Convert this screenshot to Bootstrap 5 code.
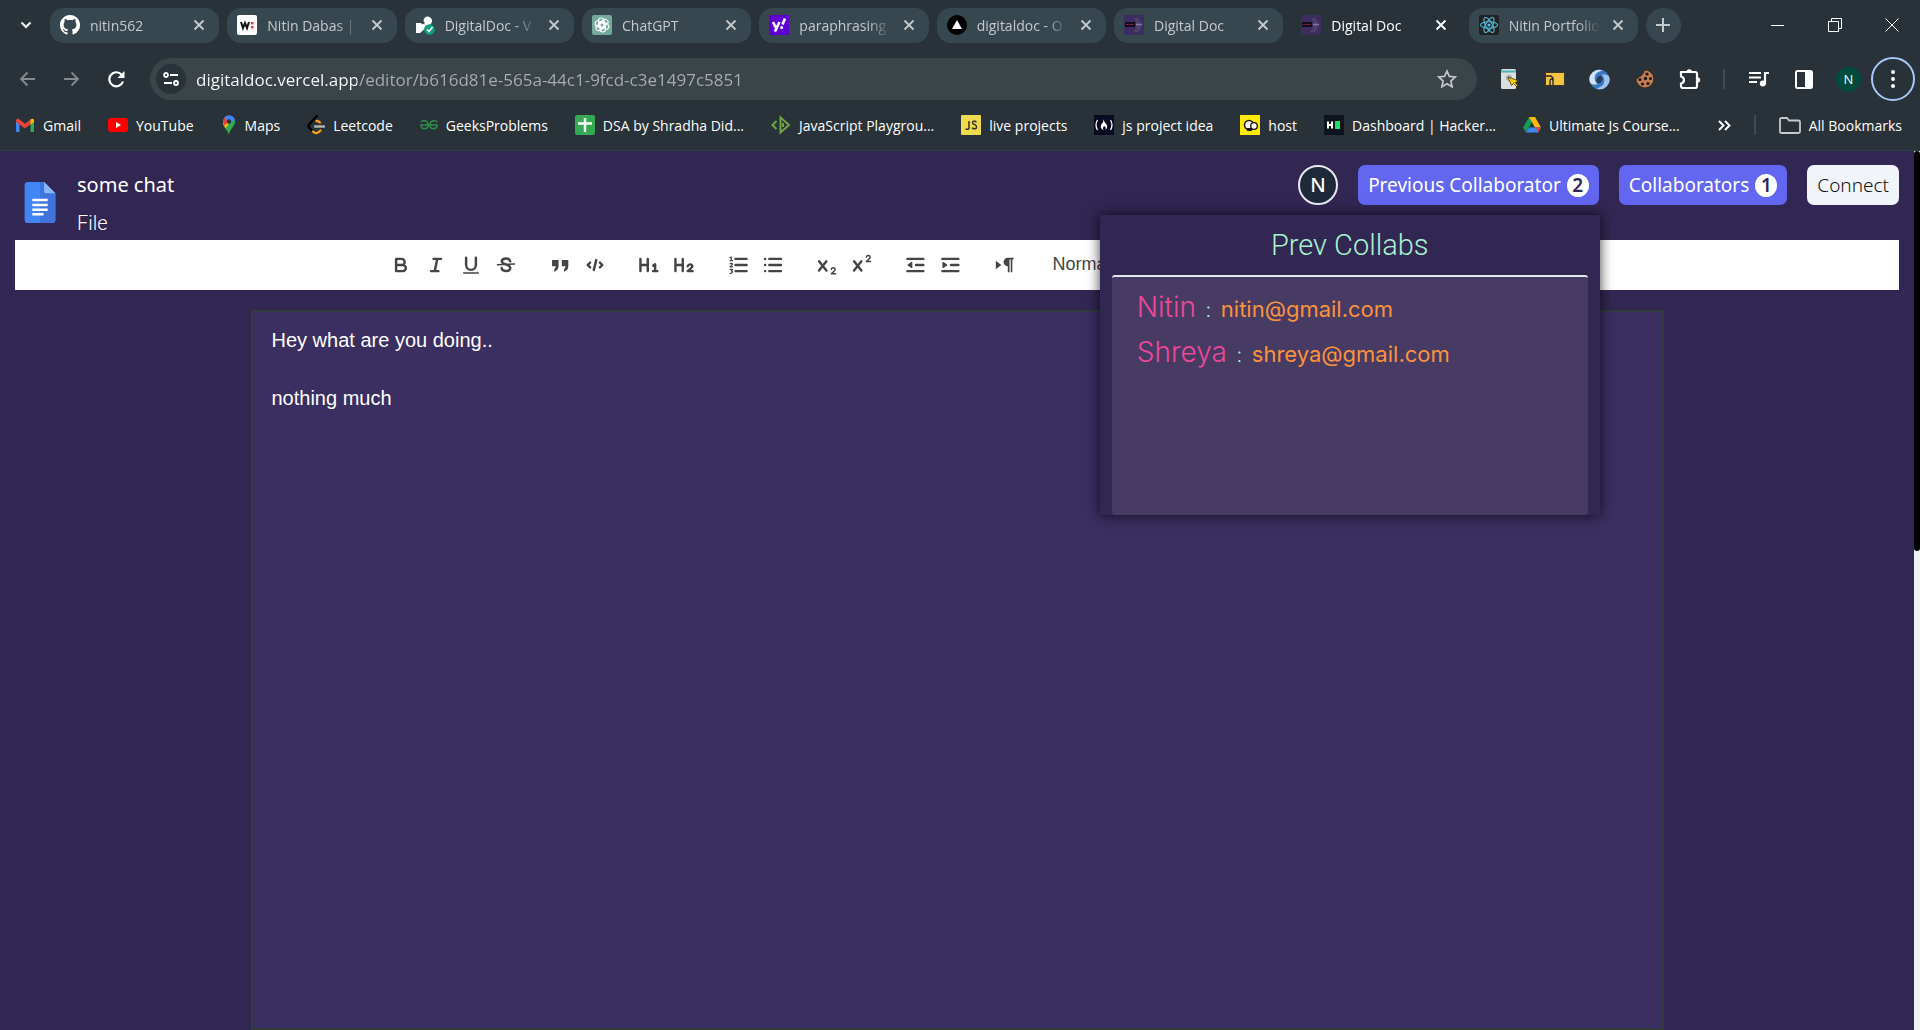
<!DOCTYPE html>
<html lang="en">
<head>
<meta charset="utf-8">
<meta name="viewport" content="width=device-width, initial-scale=1">
<title>Digital Doc</title>
<link rel="stylesheet" href="https://cdn.jsdelivr.net/npm/bootstrap@5.3.0/dist/css/bootstrap.min.css">
<style>
  html, body { height: 100%; }
  body { font-family: "Open Sans", "Noto Sans", sans-serif; background: #322653; color: #fff; overflow: hidden; }
  button { font-family: inherit; color: inherit; }
  .plain { background: none; border: 0; padding: 0; display: inline-flex; align-items: center; justify-content: center; }
  a { color: inherit; text-decoration: none; }
  svg { display: block; flex: none; }

  /* browser chrome */
  .chrome { background: #283238; height: 151px; flex: none; border-bottom: 1px solid #2c3c3c; }
  .strip { height: 50px; padding-left: 50px; position: relative; }
  .tab-search { position: absolute; left: 16px; top: 15px; width: 20px; height: 20px; }
  .tab { flex: 1 1 0; min-width: 0; height: 35px; border-radius: 14px; background: #37474f; color: #c7c9cb; padding: 0 14px 0 10px; font-size: 14px; }
  .tab.live { background: none; color: #fff; }
  .tab-name { flex: 1 1 0; min-width: 0; overflow: hidden; white-space: nowrap; margin: 0 12px 0 10px; -webkit-mask-image: linear-gradient(90deg, #000 75%, transparent); mask-image: linear-gradient(90deg, #000 75%, transparent); }
  .new-tab { width: 35px; height: 35px; border-radius: 50%; background: #37474f; color: #c7c9cb; }
  .win { width: 231px; padding: 0 21px 0 82px; }
  .bar { height: 58px; }
  .nav-set { width: 150px; padding: 0 25px 0 19px; }
  .omni { height: 42px; border-radius: 21px; background: #3a4449; }
  .site { width: 30px; height: 30px; border-radius: 50%; background: #283238; margin-left: 6px; }
  .url { border: 0; outline: 0; padding: 0; margin-left: 10px; font-size: 17px; height: 30px; color: transparent; caret-color: #fff;
         background: linear-gradient(90deg, #fff 161px, #a9aeb1 161px); -webkit-background-clip: text; background-clip: text; }
  .vline { width: 2px; height: 20px; background: #3d4c54; }
  .ext { padding: 0 5px 0 10px; }
  .ext > .plain { width: 45px; height: 44px; }
  .ext .vline { margin: 0 11px; }
  .avatar { width: 25px; height: 25px; border-radius: 50%; background: #004d40; font-size: 13px; line-height: 25px; }
  .ext > .kebab { width: 44px; border-radius: 50%; border: 2px solid #a8c7fa; }
  .marks { font-size: 14px; height: 34px; gap: 27px; padding: 0 18px 0 15px; white-space: nowrap; }
  .marks .vline { margin: 0 -4px; }

  /* document page */
  .doc { padding: 0 21px 0 15px; }
  .head { height: 89px; }
  .logo { margin: 31px 0 0 9px; }
  .names { margin: 20px 0 0 21px; }
  .acts { gap: 20px; margin-top: 14px; }
  .maven { font-family: "Noto Sans", sans-serif; }
  .title { font-size: 20px; line-height: 28px; }
  .file { font: 300 20px/28px Roboto, sans-serif; margin-top: 10px; }
  .pill { height: 40px; border: 0; border-radius: 7px; padding: 0 10px; font-size: 19px; background: #6366f1; gap: 6px; }
  .count { width: 22px; height: 23px; border-radius: 50%; background: #fff; color: #322653; font-weight: 600; display: inline-flex; align-items: center; justify-content: center; font-size: 19px; }
  .who { width: 40px; height: 40px; border-radius: 50%; background: #1e293b; border: 2px solid #e8e8ee; font-size: 20px; font-weight: 500; }
  .connect { background: #f1f5f9; color: #111; font-weight: 300; }
  .pop { position: absolute; right: -1px; top: 50px; width: 500px; height: 300px; background: #322653; box-shadow: 0 0 12px rgba(0,0,0,.75); padding: 0 12px; z-index: 5; }
  .pop h2 { height: 60px; margin: 0; font: 300 29px/60px Roboto, sans-serif; color: #a7f3d0; text-align: center; }
  .pop ul { flex: 1; margin: 0; padding: 8px 25px; list-style: none; background: #473a63; border-top: 2px solid #e2e8f0; border-radius: 3px; }
  .pop li { height: 45px; line-height: 45px; font-family: "Inter", sans-serif; font-weight: 300; color: #a7f3d0; font-size: 20px; }
  .nm { font-size: 28px; color: #ec4899; margin-right: 4px; }
  .em { font-size: 22px; color: #fb923c; font-weight: 400; margin-left: 4px; }
  .tools { background: #fff; height: 50px; color: #444; }
  .tools button { width: 35px; height: 30px; }
  .set { display: flex; margin-right: 19px; }
  .rest { width: 356px; }
  .norm { width: 133px; height: 30px; border: 0; padding: 0 0 2px 11px; background: #fff; color: #444; font: 500 18px "Liberation Sans", sans-serif; appearance: none; }
  .stroke { fill: none; stroke: #444; stroke-width: 2; stroke-linecap: round; stroke-linejoin: round; }
  .paper { width: 75%; margin-top: 20px; background: #3b2e60; border: 2px solid #343b3e; padding: 14px 19px; font: 20px/29px "Liberation Sans", sans-serif; outline: 0; }
  .track { position: absolute; right: 0; top: 151px; bottom: 0; width: 6px; background: #ebf3f6; }
  .thumb { height: 400px; background: #000; border-radius: 3px; }
</style>
</head>
<body class="d-flex flex-column">
<svg width="0" height="0" class="position-absolute">
  <defs>
    <symbol id="x" viewBox="0 0 12 12"><path d="M1.500 1.500l9 9m0-9l-9 9" stroke="currentColor" stroke-width="1.800" fill="none"/></symbol>
    <symbol id="dd" viewBox="0 0 20 20"><path fill="#3d2c60" d="M0 0h20v20H0z"/><path fill="#4b4068" d="M10 3h4l3 4v7l-3 3h-5l3-4V7z"/><path fill="#140b1c" d="M1 7h10v5H1z"/><path stroke="#8c2148" stroke-width="1" stroke-dasharray="2 .6" d="M2 9.500h8"/><path stroke="#8d86a0" stroke-width="1.500" stroke-dasharray="1.800 .5" d="M12 9.500h6"/></symbol>
  </defs>
</svg>

<header class="chrome">
  <div class="strip d-flex align-items-center gap-2">
    <button class="plain tab-search" aria-label="Search tabs"><svg width="12" height="8" viewBox="0 0 12 8"><path d="M1.500 1.500L6 6l4.500-4.500" fill="none" stroke="#fff" stroke-width="2.200"/></svg></button>
    <div class="tab d-flex align-items-center"><svg width="20" height="20" viewBox="0 0 16 16"><path fill="#fff" d="M8 0C3.580 0 0 3.580 0 8c0 3.540 2.290 6.530 5.470 7.590.4.070.55-.17.55-.38v-1.490c-2.010.37-2.530-.49-2.690-.94-.09-.23-.48-.94-.82-1.130-.28-.15-.68-.52-.01-.53.63-.01 1.080.58 1.230.82.72 1.210 1.870.87 2.330.66.07-.52.28-.87.51-1.070-1.780-.2-3.640-.89-3.640-3.950 0-.87.31-1.590.82-2.150-.08-.2-.36-1.020.08-2.120 0 0 .67-.21 2.200.82a7.600 7.600 0 0 1 4 0c1.530-1.040 2.200-.82 2.200-.82.44 1.100.16 1.920.08 2.120.51.56.82 1.270.82 2.150 0 3.070-1.870 3.750-3.650 3.950.29.25.54.73.54 1.480v2.200c0 .21.15.46.55.38A8 8 0 0 0 8 0z"/></svg><span class="tab-name">nitin562</span><button class="plain" aria-label="Close"><svg width="12" height="12"><use href="#x"/></svg></button></div>
    <div class="tab d-flex align-items-center"><svg width="20" height="20" viewBox="0 0 20 20"><rect width="20" height="20" rx="2" fill="#fff"/><path d="M4 7l2 6 2-5 2 5 2-6" fill="none" stroke="#111" stroke-width="2"/><path fill="#e33" d="M14 7h2.500v2.500H14zm0 4h2.500v2.500H14z"/></svg><span class="tab-name">Nitin Dabas |</span><button class="plain" aria-label="Close"><svg width="12" height="12"><use href="#x"/></svg></button></div>
    <div class="tab d-flex align-items-center"><svg width="20" height="20" viewBox="0 0 20 20"><path fill="#fff" d="M8.500 6a4.300 4.300 0 1 1 8 2l-2 2.500-4 1-1.500 3-4 3.500H1V8h5l1.500 1.500L10 8z"/><circle cx="14.500" cy="14.500" r="5.300" fill="#0e9f7e"/><path d="M12 14.500l2 2 3.500-4.500" fill="none" stroke="#fff" stroke-width="1.600"/></svg><span class="tab-name">DigitalDoc - V</span><button class="plain" aria-label="Close"><svg width="12" height="12"><use href="#x"/></svg></button></div>
    <div class="tab d-flex align-items-center"><svg width="20" height="20" viewBox="0 0 20 20"><rect width="20" height="20" rx="2" fill="#75a99c"/><g fill="none" stroke="#fff" stroke-width="1.100"><rect x="6.500" y="3" width="5.500" height="10" rx="2.700"/><rect x="6.500" y="3" width="5.500" height="10" rx="2.700" transform="rotate(60 10 10)"/><rect x="6.500" y="3" width="5.500" height="10" rx="2.700" transform="rotate(120 10 10)"/><rect x="6.500" y="3" width="5.500" height="10" rx="2.700" transform="rotate(180 10 10)"/><rect x="6.500" y="3" width="5.500" height="10" rx="2.700" transform="rotate(240 10 10)"/><rect x="6.500" y="3" width="5.500" height="10" rx="2.700" transform="rotate(300 10 10)"/></g></svg><span class="tab-name">ChatGPT</span><button class="plain" aria-label="Close"><svg width="12" height="12"><use href="#x"/></svg></button></div>
    <div class="tab d-flex align-items-center"><svg width="20" height="20" viewBox="0 0 20 20"><path fill="#6001d2" d="M0 0h20v20H0z"/><path d="M4 7l3 6M10.500 7L6 16.500M16 3.500l-2.500 6" fill="none" stroke="#fff" stroke-width="2.600"/><circle cx="12.700" cy="12.500" r="1.500" fill="#fff"/></svg><span class="tab-name">paraphrasing</span><button class="plain" aria-label="Close"><svg width="12" height="12"><use href="#x"/></svg></button></div>
    <div class="tab d-flex align-items-center"><svg width="20" height="20" viewBox="0 0 20 20"><circle cx="10" cy="10" r="10"/><path fill="#fff" d="M10 5l5 9H5z"/></svg><span class="tab-name">digitaldoc - O</span><button class="plain" aria-label="Close"><svg width="12" height="12"><use href="#x"/></svg></button></div>
    <div class="tab d-flex align-items-center"><svg width="20" height="20"><use href="#dd"/></svg><span class="tab-name">Digital Doc</span><button class="plain" aria-label="Close"><svg width="12" height="12"><use href="#x"/></svg></button></div>
    <div class="tab live d-flex align-items-center"><svg width="20" height="20"><use href="#dd"/></svg><span class="tab-name">Digital Doc</span><button class="plain" aria-label="Close"><svg width="12" height="12"><use href="#x"/></svg></button></div>
    <div class="tab d-flex align-items-center"><svg width="20" height="20" viewBox="0 0 20 20"><rect width="20" height="20" rx="2" fill="#222"/><g fill="none" stroke="#53c1de" stroke-width="1.100"><ellipse cx="10" cy="10" rx="8.500" ry="3.300"/><ellipse cx="10" cy="10" rx="8.500" ry="3.300" transform="rotate(60 10 10)"/><ellipse cx="10" cy="10" rx="8.500" ry="3.300" transform="rotate(120 10 10)"/></g><circle cx="10" cy="10" r="1.600" fill="#53c1de"/></svg><span class="tab-name">Nitin Portfolio</span><button class="plain" aria-label="Close"><svg width="12" height="12"><use href="#x"/></svg></button></div>
    <button class="plain new-tab" aria-label="New tab"><svg width="14" height="14" viewBox="0 0 14 14"><path d="M7 0v14M0 7h14" stroke="currentColor" stroke-width="2"/></svg></button>
    <div class="win d-flex align-items-center justify-content-between flex-shrink-0">
      <button class="plain" aria-label="Minimize"><svg width="14" height="14"><path d="M0 7.500h13" stroke="#fff"/></svg></button>
      <button class="plain" aria-label="Restore"><svg width="14" height="14"><path d="M.5 3.500h10v10H.5zM3.500 3V.5h10v10H11" fill="none" stroke="#fff"/></svg></button>
      <button class="plain" aria-label="Close window"><svg width="14" height="14"><path d="M.5.5l13 13m0-13l-13 13" stroke="#fff"/></svg></button>
    </div>
  </div>

  <div class="bar d-flex align-items-center">
    <div class="d-flex align-items-center justify-content-between flex-shrink-0 nav-set">
      <button class="plain" aria-label="Back"><svg width="16" height="16" viewBox="0 0 16 16"><path d="M16 8H2m6.500-6.500L2 8l6.500 6.500" fill="none" stroke="#858b8e" stroke-width="1.800"/></svg></button>
      <button class="plain" aria-label="Forward"><svg width="16" height="16" viewBox="0 0 16 16"><path d="M0 8h14M7.500 1.500L14 8l-6.500 6.500" fill="none" stroke="#858b8e" stroke-width="1.800"/></svg></button>
      <button class="plain" aria-label="Reload"><svg width="17" height="17" viewBox="0 0 17 17"><path d="M15 10.500A7 7 0 1 1 13.500 3.500L15 5" fill="none" stroke="#fff" stroke-width="2.200"/><path d="M16.500 0v7h-7z" fill="#fff"/></svg></button>
    </div>
    <div class="omni flex-grow-1 d-flex align-items-center">
      <button class="plain site" aria-label="Site information"><svg width="16" height="14" viewBox="0 0 16 14" fill="none" stroke="#fff" stroke-width="1.800"><circle cx="3" cy="3" r="2"/><path d="M7 3h8M1 11h8"/><circle cx="13" cy="11" r="2"/></svg></button>
      <input class="url flex-grow-1" type="text" aria-label="Address" value="digitaldoc.vercel.app/editor/b616d81e-565a-44c1-9fcd-c3e1497c5851">
      <button class="plain me-3 pe-1" aria-label="Bookmark this page"><svg width="20" height="20" viewBox="0 0 20 20"><path d="M10 2l2.400 5.400 5.900.6-4.400 4 1.200 5.800L10 14.800l-5.100 3 1.200-5.800-4.400-4 5.900-.6z" fill="none" stroke="#c4c7c9" stroke-width="1.700"/></svg></button>
    </div>
    <div class="ext d-flex align-items-center flex-shrink-0">
      <button class="plain" aria-label="Page tool"><svg width="20" height="22" viewBox="0 0 20 22"><rect x="1" y="1" width="15" height="20" rx="1.500" fill="#dedede"/><path fill="#45b5bd" d="M1 2.500h15v2H1z"/><circle cx="9" cy="10" r="3" fill="#aaa"/><path d="M8 9l11 4-4 1.500 3 3-1.500 1-3-3-2 2z" fill="#fc0" stroke="#222" stroke-width=".7"/></svg></button>
      <button class="plain" aria-label="Network tool"><svg width="20" height="14" viewBox="0 0 20 14"><rect x=".5" y=".5" width="19" height="13" rx="1" fill="#f3c444" stroke="#3a3420"/><path d="M1 4h5l2 2v7M5 14V9q0-2 1.500-2T8 9" fill="none" stroke="#222" stroke-width="1.300"/></svg></button>
      <button class="plain" aria-label="Sync tool"><svg width="21" height="21" viewBox="0 0 20 20"><circle cx="10" cy="10" r="9.500" fill="#3b78c4"/><path d="M1 13A9 9 0 0 1 13 1.500C8 2.500 5 5 5.500 10q.5 3 2.500 4.500Q3 15.500 1 13z" fill="#cfe2f8"/><path d="M19 7A9 9 0 0 1 7 18.500c5-1 8-3.500 7.500-8.500q-.5-3-2.500-4.500Q17 4.500 19 7z" fill="#9fc3ec"/><ellipse cx="10" cy="10" rx="2.600" ry="3.600" fill="#283c55" transform="rotate(25 10 10)"/></svg></button>
      <button class="plain" aria-label="Cookie tool"><svg width="20" height="20" viewBox="0 0 20 20"><path d="M11 1a9 9 0 1 0 8 8c-2 .5-3-.5-3-2-2 .5-3-.5-3-2-2-.5-2-2-2-4z" transform="matrix(-1 0 0 1 20 0)" fill="#c17b53" stroke="#2b1a12" stroke-width=".8"/><g fill="#1d1512"><circle cx="12" cy="5" r="1.600"/><circle cx="15.500" cy="9.500" r="1.500"/><circle cx="10.500" cy="9.500" r="1.700"/><circle cx="5" cy="10.500" r="1.500"/><circle cx="7.500" cy="15" r="1.600"/><circle cx="13" cy="14.500" r="1.600"/></g></svg></button>
      <button class="plain" aria-label="Extensions"><svg width="22" height="22" viewBox="0 0 22 22"><path d="M2 4h14q2 0 2 2v12q0 2-2 2H4q-2 0-2-2v-2.500c4-1 4-6 0-7z" fill="none" stroke="#fff" stroke-width="2.200" stroke-linejoin="round"/><path fill="#fff" d="M7.500 4a2.700 2.700 0 0 1 5.400 0zM18.500 9.300a2.700 2.700 0 0 1 0 5.400z"/></svg></button>
      <span class="vline"></span>
      <button class="plain" aria-label="Media"><svg width="20" height="16" viewBox="0 0 20 16"><path d="M0 2h12M0 6.500h12M0 11h8M16 13V2h4" fill="none" stroke="#fff" stroke-width="2.200"/><circle cx="13.800" cy="12.500" r="3" fill="#fff"/></svg></button>
      <button class="plain" aria-label="Side panel"><svg width="18" height="19" viewBox="0 0 18 19"><rect x="1" y="1" width="16" height="17" rx="1.500" fill="none" stroke="#fff" stroke-width="2"/><path fill="#fff" d="M10 1h7v17h-7z"/></svg></button>
      <button class="plain" aria-label="Profile"><span class="avatar">N</span></button>
      <button class="plain kebab" aria-label="Menu"><svg width="4" height="18"><g fill="#fff"><circle cx="2" cy="2" r="2"/><circle cx="2" cy="9" r="2"/><circle cx="2" cy="16" r="2"/></g></svg></button>
    </div>
  </div>

  <nav class="marks d-flex align-items-center">
    <a href="#" class="d-flex align-items-center gap-2"><svg width="20" height="15" viewBox="0 0 20 15"><path fill="#4285f4" d="M1 3l3.500 3v8H2a1 1 0 0 1-1-1z"/><path fill="#34a853" d="M15.500 6L19 3v10a1 1 0 0 1-1 1h-2.500z"/><path fill="#ea4335" d="M1 2.500C1 .8 3 .3 4.200 1.200L10 5.700l5.800-4.500v4.900L10 10.500 1 4z"/><path fill="#fbbc04" d="M15.500 1.500C17 .3 19 .8 19 2.500V4l-3.500 2.500z"/></svg>Gmail</a>
    <a href="#" class="d-flex align-items-center gap-2"><svg width="20" height="14"><rect width="20" height="14" rx="3" fill="#f00"/><path fill="#fff" d="M8 4l5 3-5 3z"/></svg>YouTube</a>
    <a href="#" class="d-flex align-items-center gap-2"><svg width="16" height="20" viewBox="1 0 16 20"><path fill="#34a853" d="M9 20C8 15 3 13 3 7l12-2c1 6-5 8-6 15z"/><path fill="#fbbc04" d="M3 8l8-3-5 8C4 11 3 10 3 8z"/><path fill="#ea4335" d="M2.800 6A6 6 0 0 1 5 2l4 4-5 5z"/><path fill="#4285f4" d="M4.500 2.200A6.200 6.200 0 0 1 15 5L9 9z"/><circle cx="9" cy="6.500" r="2.200" fill="#283238"/></svg>Maps</a>
    <a href="#" class="d-flex align-items-center gap-2"><svg width="18" height="20" viewBox="0 0 18 20" fill="none" stroke-width="2.300" stroke-linecap="round"><path d="M10 1L2.500 9q-2 2 0 4L5 15.500" stroke="#000"/><path d="M9.500 6q2 0 3.500 1.500M6 16.500q3.500 3.500 7.500-1" stroke="#ffa116"/><path d="M8 11.500h9" stroke="#b3b3b3"/></svg>Leetcode</a>
    <a href="#" class="d-flex align-items-center gap-2"><svg width="18" height="12" viewBox="0 0 18 12" fill="none" stroke="#2f8d46" stroke-width="1.600"><path d="M1 3c3-3 7-1 7 3 0 5-7 5-7 0h16c0 5-7 5-7 0 0-4 4-6 7-3"/></svg>GeeksProblems</a>
    <a href="#" class="d-flex align-items-center gap-2"><svg width="20" height="20"><rect width="20" height="20" rx="2" fill="#34a853"/><path d="M10 3v14M3 8.500h14" stroke="#fff" stroke-width="2.400"/></svg>DSA by Shradha Did...</a>
    <a href="#" class="d-flex align-items-center gap-2"><svg width="20" height="20" viewBox="0 0 20 20" fill="none" stroke="#6da544" stroke-width="2"><path d="M5.500 6L1.500 10l4 4M9.500 2.500v15L18 10zM12 8v4"/></svg>JavaScript Playgrou...</a>
    <a href="#" class="d-flex align-items-center gap-2"><svg width="20" height="20"><rect width="20" height="20" rx="1" fill="#f0db4f"/><path d="M8 6v7q0 2-3.500 1M15.500 7q-4-2-4 .5 0 1.500 2 2t2 2.500q0 3-4.500 1" fill="none" stroke="#323330" stroke-width="1.500"/></svg>live projects</a>
    <a href="#" class="d-flex align-items-center gap-2"><svg width="20" height="20"><path fill="#0a0a23" d="M0 0h20v20H0z"/><path d="M3.500 5q-3 5 0 10M16.500 5q3 5 0 10" fill="none" stroke="#fff" stroke-width="1.300"/><path fill="#fff" d="M9.500 4c0 4 5 5 3.500 9l-1.500 2q1-3-1.500-4-2 2-.5 4C5 13 7 9 9 7.500z"/></svg>js project idea</a>
    <a href="#" class="d-flex align-items-center gap-2"><svg width="20" height="20"><path fill="#ffeb00" d="M0 0h20v20H0z"/><circle cx="9" cy="10" r="4.500" fill="#fff" stroke="#111" stroke-width="1.500"/><circle cx="14" cy="11" r="3.300" fill="#fff" stroke="#111" stroke-width="1.300"/><path fill="#111" d="M7 13h5v3H7z"/></svg>host</a>
    <a href="#" class="d-flex align-items-center gap-2"><svg width="20" height="20"><path fill="#0e141e" d="M0 0h20v20H0z"/><path d="M4 6.500v7M8 6.500v7M4 10h4" stroke="#fff" stroke-width="2"/><path fill="#1ee067" d="M11 6h5v8h-5z"/></svg>Dashboard | Hacker...</a>
    <a href="#" class="d-flex align-items-center gap-2"><svg width="18" height="16" viewBox="0 0 18 16"><path fill="#0f9d58" d="M6 0L0 10.500l3 5L9 5z"/><path fill="#ffba00" d="M6 0h6l6 10.500h-6z"/><path fill="#4285f4" d="M6 10.500h12l-3 5H3z"/><path fill="#ea4335" d="M13 10.500h5l-3 5z"/></svg>Ultimate Js Course...</a>
    <button class="plain ms-auto" aria-label="More bookmarks"><svg width="13" height="11" viewBox="0 0 13 11"><path d="M1 1l4.500 4.500L1 10M7 1l4.500 4.500L7 10" fill="none" stroke="#fff" stroke-width="1.900"/></svg></button>
    <span class="vline"></span>
    <a href="#" class="d-flex align-items-center gap-2"><svg width="22" height="17" viewBox="0 0 22 17"><path d="M1 2.500Q1 1 2.500 1H8l2 2.500h9.500q1.500 0 1.500 1.500v9.500q0 1.500-1.500 1.500h-17Q1 16 1 14.500z" fill="none" stroke="#c7c9cb" stroke-width="1.800"/></svg>All Bookmarks</a>
  </nav>
</header>

<main class="doc flex-grow-1 d-flex flex-column">
  <div class="d-flex align-items-start head">
    <svg class="logo" width="32" height="41" viewBox="0 0 30 40"><path fill="#4285f4" d="M3 0h16l11 11v26a3 3 0 0 1-3 3H3a3 3 0 0 1-3-3V3a3 3 0 0 1 3-3z"/><path fill="#3f74dd" d="M15 0h4v11h11v26a3 3 0 0 1-3 3H15z"/><path fill="#8ab4f8" d="M19 0l11 11H21q-2 0-2-2z"/><path stroke="#fff" stroke-width="2.500" d="M7.500 17.500h15M7.500 22.500h15M7.500 27h15M7.500 31.500h11"/></svg>
    <div class="names">
      <div class="title maven">some chat</div>
      <button class="plain file">File</button>
    </div>
    <div class="acts ms-auto d-flex maven">
      <button class="plain who" aria-label="Account">N</button>
      <div class="position-relative">
        <button class="plain pill">Previous Collaborator <span class="count">2</span></button>
        <section class="pop d-flex flex-column">
          <h2>Prev Collabs</h2>
          <ul>
            <li><span class="nm">Nitin</span> : <span class="em">nitin@gmail.com</span></li>
            <li><span class="nm">Shreya</span> : <span class="em">shreya@gmail.com</span></li>
          </ul>
        </section>
      </div>
      <button class="plain pill">Collaborators <span class="count">1</span></button>
      <button class="plain pill connect">Connect</button>
    </div>
  </div>

  <div class="tools d-flex align-items-center justify-content-center flex-shrink-0">
    <div class="set"><button class="plain" aria-label="Bold"><svg class="stroke" width="22" height="22" viewBox="0 0 18 18"><path d="M5 4h4.500a2.500 2.500 0 0 1 0 5H5zM5 9h5.500a2.500 2.500 0 0 1 0 5H5z"/></svg></button><button class="plain" aria-label="Italic"><svg class="stroke" width="22" height="22" viewBox="0 0 18 18"><path d="M7 4h6M5 14h6M8 14l2-10"/></svg></button><button class="plain" aria-label="Underline"><svg class="stroke" width="22" height="22" viewBox="0 0 18 18"><path d="M5 3v6a4 4 0 0 0 8 0V3"/><path stroke-width="1.200" d="M3 15.500h12"/></svg></button><button class="plain" aria-label="Strike"><svg class="stroke" width="22" height="22" viewBox="0 0 18 18"><path stroke-width="1.200" d="M2 8.800l14-.6"/><path d="M12.500 6c-.5-3-6.500-3-7 0 0 3 7 2 7 5.500-.5 3.500-7 3-7 0"/></svg></button></div>
    <div class="set"><button class="plain" aria-label="Quote"><svg width="22" height="22" viewBox="0 0 18 18" fill="#444"><path d="M2.500 5h5.300v5q0 3-3.500 4.500v-2Q5.500 11 5.500 10h-3zM10.500 5h5.300v5q0 3-3.500 4.500v-2q1.200-1.500 1.200-2.500h-3z"/></svg></button><button class="plain" aria-label="Code"><svg class="stroke" width="22" height="22" viewBox="0 0 18 18"><path d="M5 7L3 9l2 2M13 7l2 2-2 2M10 5l-2 8"/></svg></button></div>
    <div class="set"><button class="plain" aria-label="Heading 1"><svg class="stroke" width="22" height="22" viewBox="0 0 18 18"><path d="M2 4v10M8 4v10M2 9h6M12.500 9.500L14 8.500V14M12.300 14h3.500"/></svg></button><button class="plain" aria-label="Heading 2"><svg class="stroke" width="22" height="22" viewBox="0 0 18 18"><path d="M2 4v10M8 4v10M2 9h6M12 10q.5-1.500 2-1.500t1.800 1.500q0 1-3.800 4h4"/></svg></button></div>
    <div class="set"><button class="plain" aria-label="Numbered list"><svg class="stroke" width="22" height="22" viewBox="0 0 18 18"><path d="M7 4h9M7 9h9M7 14h9"/><path stroke-width="1" d="M2.500 3l1-.5v3M2.500 5.500h2M2.500 8q2-1 2 .5l-2 2h2M2.500 12.500h2l-1 1.300q2 .5 0 2h-1"/></svg></button><button class="plain" aria-label="Bullet list"><svg class="stroke" width="22" height="22" viewBox="0 0 18 18"><path d="M6 4h9.500M6 9h9.500M6 14h9.500M2.500 4h.1M2.500 9h.1M2.500 14h.1"/></svg></button></div>
    <div class="set"><button class="plain" aria-label="Subscript"><svg class="stroke" width="22" height="22" viewBox="0 0 18 18"><path d="M2.500 6l6 7.500M8.500 6l-6 7.500"/><path stroke-width="1.200" d="M12.500 12.500q.3-1.200 1.700-1.200t1.500 1.200q0 1-3.200 3.700h3.500"/></svg></button><button class="plain" aria-label="Superscript"><svg class="stroke" width="22" height="22" viewBox="0 0 18 18"><path d="M2.500 6l6 7.500M8.500 6l-6 7.500"/><path stroke-width="1.200" d="M12.500 2.500q.3-1.200 1.700-1.200t1.500 1.200q0 1-3.200 3.700h3.500"/></svg></button></div>
    <div class="set"><button class="plain" aria-label="Outdent"><svg class="stroke" width="22" height="22" viewBox="0 0 18 18"><path d="M2 4h13M9 9h6M2 14h13"/><path fill="#444" stroke-width="1" d="M5.500 7v4L2.500 9z"/></svg></button><button class="plain" aria-label="Indent"><svg class="stroke" width="22" height="22" viewBox="0 0 18 18"><path d="M2 4h13M9 9h6M2 14h13"/><path fill="#444" stroke-width="1" d="M2.500 7v4l3-2z"/></svg></button></div>
    <div class="set"><button class="plain" aria-label="Direction"><svg width="22" height="22" viewBox="0 0 18 18" fill="#444"><path d="M1.500 5.500L6 9l-4.500 3.500zM16 3v1.500h-1V15h-1.300V4.500h-1V15h-1.400v-5a3.500 3.500 0 0 1 0-7z"/></svg></button></div>
    <select class="norm" aria-label="Size"><option>Normal</option></select>
    <div class="rest"></div>
  </div>

  <div class="paper flex-grow-1 mx-auto" contenteditable="true" role="textbox" aria-label="Document">
    <div>Hey what are you doing..</div><div><br></div><div>nothing much</div>
  </div>
</main>
<div class="track"><div class="thumb"></div></div>
<script src="https://cdn.jsdelivr.net/npm/bootstrap@5.3.0/dist/js/bootstrap.bundle.min.js"></script>
</body>
</html>
